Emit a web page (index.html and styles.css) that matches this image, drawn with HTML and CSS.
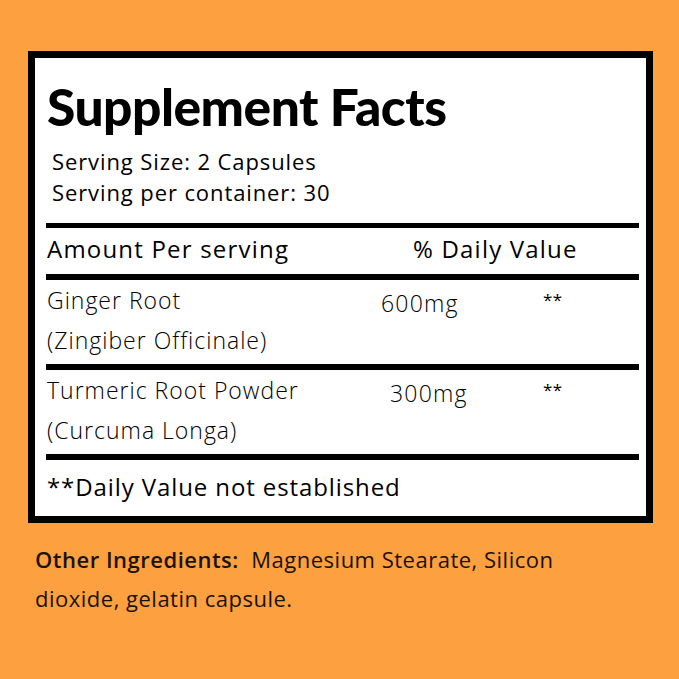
FILE: index.html
```html
<!DOCTYPE html>
<html lang="en">
<head>
<meta charset="utf-8">
<title>Supplement Facts</title>
<link rel="stylesheet" href="styles.css">
</head>
<body>
<main class="page">
  <section class="facts">
    <h1 class="title">Supplement Facts</h1>
    <div class="serving">
      <p class="serving-line">Serving Size: 2 Capsules</p>
      <p class="serving-line">Serving per container: 30</p>
    </div>
    <div class="rule"></div>
    <div class="head-row">
      <span class="head-name">Amount Per serving</span>
      <span class="head-dv">% Daily Value</span>
    </div>
    <div class="rule"></div>
    <div class="item">
      <div class="item-name">
        <span class="line">Ginger Root</span>
        <span class="line">(Zingiber Officinale)</span>
      </div>
      <span class="item-amount amount-a">600mg</span>
      <span class="item-dv">**</span>
    </div>
    <div class="rule"></div>
    <div class="item">
      <div class="item-name">
        <span class="line">Turmeric Root Powder</span>
        <span class="line">(Curcuma Longa)</span>
      </div>
      <span class="item-amount amount-b">300mg</span>
      <span class="item-dv">**</span>
    </div>
    <div class="rule"></div>
    <p class="note">**Daily Value not established</p>
  </section>
  <p class="other"><strong class="other-label">Other Ingredients:</strong>&nbsp; Magnesium Stearate, Silicon<br>dioxide, gelatin capsule.</p>
</main>
</body>
</html>
```

FILE: styles.css
```css
* {
  box-sizing: border-box;
}

html,
body {
  margin: 0;
  padding: 0;
  background: #fda03f;
}

body {
  width: 679px;
  height: 679px;
  overflow: hidden;
  font-family: "Open Sans", "Lato", sans-serif;
  color: #000;
}

.page {
  padding: 51px 26px 0 28px;
}

.facts {
  width: 625px;
  height: 472px;
  background: #fff;
  border: 7px solid #000;
  padding: 18px 7px 0 11px;
}

.title {
  margin: 0;
  font-family: "Lato", sans-serif;
  font-weight: 900;
  font-size: 51.5px;
  line-height: 60px;
  height: 60px;
  letter-spacing: -0.5px;
  padding-left: 1px;
}

.serving {
  padding: 10px 0 0 6px;
}

.serving-line {
  margin: 0;
  font-size: 22px;
  font-weight: 400;
  line-height: 31px;
  letter-spacing: 0.9px;
}

.rule {
  height: 6px;
  background: #000;
}

.serving + .rule {
  margin-top: 15px;
  height: 5px;
}

.head-row {
  display: grid;
  grid-template-columns: 366px 1fr;
  height: 46px;
  align-items: center;
  padding-bottom: 6px;
  font-size: 24px;
  font-weight: 500;
  letter-spacing: 1.2px;
  padding-left: 1px;
}

.item {
  display: grid;
  grid-template-columns: 334px 162px 1fr;
  padding: 0 0 4px 1px;
  font-weight: 300;
}

.item-name {
  display: flex;
  flex-direction: column;
}

.line {
  font-size: 23px;
  line-height: 40px;
  letter-spacing: 1px;
}

.item-amount {
  font-size: 23px;
  line-height: 46px;
  letter-spacing: 1.2px;
}

.amount-b {
  padding-left: 9px;
}

.item-dv {
  font-size: 17px;
  font-weight: 400;
  line-height: 40px;
  letter-spacing: 0.5px;
}

.note {
  margin: 0;
  font-size: 24px;
  font-weight: 500;
  line-height: 54px;
  letter-spacing: 0.9px;
  padding-left: 1px;
}

.other {
  margin: 17px 0 0 7px;
  font-size: 22px;
  font-weight: 400;
  line-height: 39px;
  letter-spacing: 0.5px;
  color: #1a1206;
}

.other-label {
  font-weight: 600;
}
```
